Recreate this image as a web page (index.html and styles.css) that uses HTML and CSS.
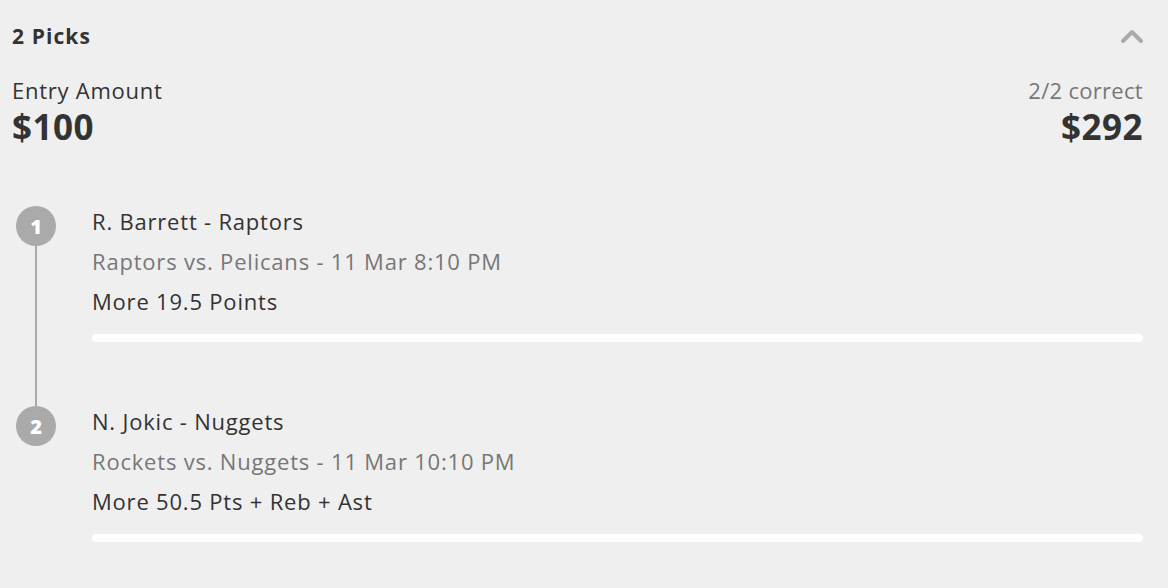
FILE: index.html
```html
<!DOCTYPE html>
<html>
<head>
<meta charset="utf-8">
<link rel="stylesheet" href="styles.css">
</head>
<body>
<div class="card">
  <div class="head">
    <div class="title">2 Picks</div>
    <svg class="chev" width="24" height="16" viewBox="0 0 24 16"><path d="M3 13 L12 4 L21 13" fill="none" stroke="#aaaaaa" stroke-width="4" stroke-linecap="round" stroke-linejoin="round"/></svg>
  </div>
  <div class="amounts">
    <div class="col">
      <div class="label">Entry Amount</div>
      <div class="money">$100</div>
    </div>
    <div class="col right">
      <div class="label muted">2/2 correct</div>
      <div class="money">$292</div>
    </div>
  </div>
  <div class="picks">
    <div class="pick">
      <div class="rail">
        <div class="num">1</div>
        <div class="line"></div>
      </div>
      <div class="body">
        <div class="name">R. Barrett - Raptors</div>
        <div class="game">Raptors vs. Pelicans - 11 Mar 8:10 PM</div>
        <div class="line-txt">More 19.5 Points</div>
        <div class="bar"></div>
      </div>
    </div>
    <div class="pick">
      <div class="rail">
        <div class="num">2</div>
      </div>
      <div class="body">
        <div class="name">N. Jokic - Nuggets</div>
        <div class="game">Rockets vs. Nuggets - 11 Mar 10:10 PM</div>
        <div class="line-txt">More 50.5 Pts + Reb + Ast</div>
        <div class="bar"></div>
      </div>
    </div>
  </div>
</div>
</body>
</html>
```
FILE: styles.css
```css
html, body {
  margin: 0;
  padding: 0;
  background: #efefef;
}
body {
  font-family: "Open Sans", "Noto Sans", sans-serif;
  color: #333333;
}
.card {
  padding: 18px 25px 0 12px;
}
.head {
  display: flex;
  justify-content: space-between;
  align-items: center;
  height: 36px;
}
.title {
  font-size: 21px;
  font-weight: 700;
  letter-spacing: 1.1px;
}
.chev {
  margin-right: -1px;
}
.amounts {
  display: flex;
  justify-content: space-between;
  margin-top: 21px;
}
.col {
  display: flex;
  flex-direction: column;
}
.col.right {
  align-items: flex-end;
}
.label {
  font-size: 22px;
  line-height: 30px;
  letter-spacing: 0.75px;
}
.muted {
  color: #777777;
  letter-spacing: 0.3px;
}
.money {
  font-size: 35px;
  font-weight: 700;
  line-height: 44px;
  letter-spacing: 0.5px;
}
.picks {
  margin-top: 54px;
}
.pick {
  display: flex;
  height: 200px;
}
.rail {
  width: 48px;
  display: flex;
  flex-direction: column;
  align-items: center;
  padding-top: 3px;
}
.num {
  width: 40px;
  height: 40px;
  border-radius: 50%;
  background: #aaaaaa;
  color: #ffffff;
  font-weight: 800;
  font-size: 20px;
  display: flex;
  align-items: center;
  justify-content: center;
  flex: none;
}
.line {
  width: 2px;
  flex: 1;
  margin-bottom: -3px;
  background: #aaaaaa;
}
.body {
  flex: 1;
  margin-left: 32px;
  margin-top: -2px;
}
.name, .game, .line-txt {
  font-size: 22px;
  line-height: 40px;
  letter-spacing: 0.8px;
}
.name, .line-txt {
  color: #333333;
}
.game {
  color: #777777;
}
.bar {
  margin-top: 13px;
  height: 8px;
  border-radius: 4px;
  background: #ffffff;
}
```
